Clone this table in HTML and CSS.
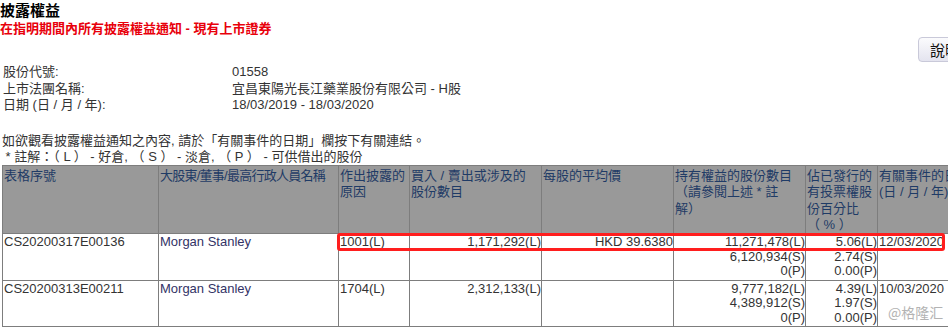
FILE: index.html
```html
<!DOCTYPE html>
<html lang="zh-Hant">
<head>
<meta charset="utf-8">
<title>披露權益</title>
<link rel="stylesheet" href="styles.css">
</head>
<body>
<div class="page">
  <h1 class="title">披露權益</h1>
  <h2 class="subtitle">在指明期間內所有披露權益通知 - 現有上市證券</h2>
  <div class="toolbar"><button class="help-btn" type="button">說明</button></div>
  <dl class="info">
    <dt>股份代號:</dt><dd>01558</dd>
    <dt>上市法團名稱:</dt><dd>宜昌東陽光長江藥業股份有限公司 - H股</dd>
    <dt>日期 (日 / 月 / 年):</dt><dd>18/03/2019 - 18/03/2020</dd>
  </dl>
  <p class="note">如欲觀看披露權益通知之內容, 請於「有關事件的日期」欄按下有關連結。</p>
  <p class="legend">&nbsp;* 註解：（ L ） - 好倉, （ S ） - 淡倉, （ P ） - 可供借出的股份</p>
  <div class="table-wrap">
    <table class="di-table">
      <colgroup>
        <col class="c1"><col class="c2"><col class="c3"><col class="c4"><col class="c5"><col class="c6"><col class="c7"><col class="c8">
      </colgroup>
      <thead>
        <tr>
          <th>表格序號</th>
          <th class="tight">大股東/董事/最高行政人員名稱</th>
          <th>作出披露的<br>原因</th>
          <th>買入 / 賣出或涉及的<br>股份數目</th>
          <th>每股的平均價</th>
          <th>持有權益的股份數目<br>（請參閱上述 * 註<br>解）</th>
          <th>佔已發行的<br>有投票權股<br>份百分比<br>（ % ）</th>
          <th>有關事件的日期<br>(日 / 月 / 年)</th>
        </tr>
      </thead>
      <tbody>
        <tr>
          <td class="ref">CS20200317E00136</td>
          <td class="name">Morgan Stanley</td>
          <td>1001(L)</td>
          <td class="num">1,171,292(L)</td>
          <td class="num">HKD 39.6380</td>
          <td class="num">11,271,478(L)<br>6,120,934(S)<br>0(P)</td>
          <td class="num">5.06(L)<br>2.74(S)<br>0.00(P)</td>
          <td>12/03/2020</td>
        </tr>
        <tr>
          <td class="ref">CS20200313E00211</td>
          <td class="name">Morgan Stanley</td>
          <td>1704(L)</td>
          <td class="num">2,312,133(L)</td>
          <td class="num"></td>
          <td class="num">9,777,182(L)<br>4,389,912(S)<br>0(P)</td>
          <td class="num">4.39(L)<br>1.97(S)<br>0.00(P)</td>
          <td>10/03/2020</td>
        </tr>
        <tr>
          <td class="ref">&nbsp;</td><td></td><td></td><td></td><td></td><td></td><td></td><td></td>
        </tr>
      </tbody>
    </table>
    <div class="highlight"></div>
  </div>
</div>
<div class="watermark">@格隆汇</div>
</body>
</html>
```
FILE: styles.css
```css
html, body {
  margin: 0;
  padding: 0;
  overflow: hidden;
  background: #ffffff;
}

body {
  font-family: "Liberation Sans", "Noto Sans CJK TC", sans-serif;
  font-size: 13px;
  color: #333333;
  position: relative;
  width: 948px;
  height: 327px;
}

.page {
  width: 985px;
}

.title {
  margin: 1px 0 0 0;
  font-size: 15px;
  line-height: 20px;
  font-weight: bold;
  color: #000000;
}

.subtitle {
  margin: 0;
  font-size: 13px;
  line-height: 16px;
  font-weight: bold;
  color: #e8000b;
}

.toolbar {
  height: 25px;
  display: flex;
  justify-content: flex-start;
  padding-left: 918px;
}

.help-btn {
  width: 62px;
  height: 25px;
  padding: 0 0 0 11px;
  text-align: left;
  font-family: "Noto Sans CJK TC", sans-serif;
  font-size: 15px;
  line-height: 23px;
  color: #111111;
  border: 1px solid #c9c9d9;
  border-radius: 4px;
  background: linear-gradient(#fbfbfd, #e4e4ef);
}

.info {
  margin: 2px 0 0 3px;
  display: grid;
  grid-template-columns: 229px auto;
  line-height: 16.5px;
}

.info dt, .info dd {
  margin: 0;
}

.note {
  margin: 18px 0 0 2px;
  line-height: 17px;
}

.legend {
  margin: 0 0 0 2px;
  line-height: 16.5px;
}

.table-wrap {
  position: relative;
  margin-left: 2px;
}

.di-table {
  border-collapse: collapse;
  table-layout: fixed;
  width: 983px;
  font-size: 13px;
}

.c1 { width: 156px; }
.c2 { width: 180px; }
.c3 { width: 71px; }
.c4 { width: 132px; }
.c5 { width: 132px; }
.c6 { width: 132px; }
.c7 { width: 72px; }
.c8 { width: 108px; }

.di-table th,
.di-table td {
  border: 1px solid #7d7d7d;
  vertical-align: top;
  text-align: left;
}

.di-table th {
  background: #999999;
  color: #1f3b66;
  font-weight: normal;
  padding: 2px 1px 0 1px;
  line-height: 16.25px;
  height: 65px;
}

.di-table th.tight {
  letter-spacing: -0.75px;
  white-space: nowrap;
}

.di-table td {
  padding: 1px 1px 1px 1px;
  line-height: 14.5px;
  height: 43.5px;
  color: #333333;
  white-space: nowrap;
}

.di-table td.num {
  text-align: right;
  padding-right: 0;
}

.di-table td.name {
  color: #333366;
}

.highlight {
  position: absolute;
  left: 335px;
  top: 68px;
  width: 608px;
  height: 18px;
  box-sizing: border-box;
  border: 3px solid #ff1e1e;
  border-radius: 3px;
}

.watermark {
  position: absolute;
  left: 888px;
  top: 303px;
  font-family: "Noto Sans CJK SC", sans-serif;
  font-size: 14px;
  line-height: 18px;
  color: #b3b3b3;
}
```
